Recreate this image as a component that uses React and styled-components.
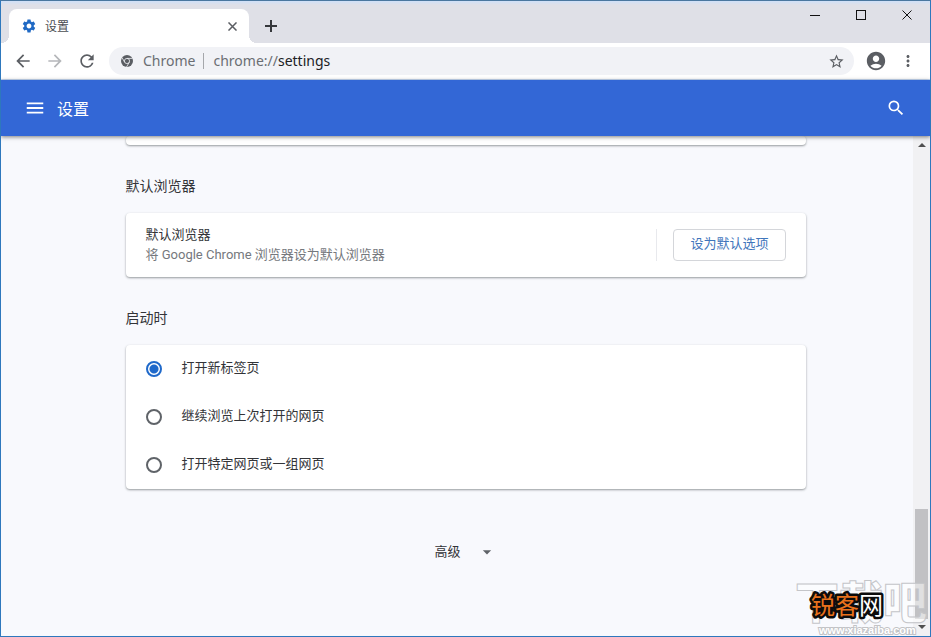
import React from 'react';
import styled, { createGlobalStyle } from 'styled-components';
import {
  MdAccountCircle,
  MdArrowBack,
  MdArrowDropDown,
  MdArrowForward,
  MdMenu,
  MdMoreVert,
  MdRefresh,
  MdSearch,
  MdSettings,
  MdStarBorder
} from 'react-icons/md';

const GlobalStyle = createGlobalStyle`
  * {
    box-sizing: border-box;
  }
  body {
    margin: 0;
    font-family: Roboto, "Noto Sans CJK SC", sans-serif;
    font-size: 13px;
    line-height: 20px;
    color: #333438;
  }
  button, input {
    font: inherit;
  }
`;

const Window = styled.div`
  position: relative;
  display: flex;
  flex-direction: column;
  height: 100vh;
  overflow: hidden;
  border: 1px solid #2e78bd;
  border-top-color: #4a779f;
  background: #f8f9fd;
`;

const TabStrip = styled.div`
  display: flex;
  flex: none;
  height: 42px;
  padding: 8px 0 0 8px;
  background: linear-gradient(#cfe0f8 0, #dfe0e7 4px);
`;

const Tab = styled.div`
  position: relative;
  display: flex;
  align-items: center;
  width: 240px;
  padding: 0 9px 0 12px;
  border-radius: 8px 8px 0 0;
  background: #fff;
  font-size: 12px;
  color: #4a4d51;

  &::before,
  &::after {
    content: '';
    position: absolute;
    bottom: 0;
    width: 8px;
    height: 8px;
  }
  &::before {
    right: 100%;
    background: radial-gradient(circle at 0 0, transparent 8px, #fff 8px);
  }
  &::after {
    left: 100%;
    background: radial-gradient(circle at 100% 0, transparent 8px, #fff 8px);
  }
`;

const TabTitle = styled.span`
  flex: 1;
  margin-left: 8px;
  padding-top: 2px;
`;

const IconButton = styled.button`
  display: flex;
  flex: none;
  align-items: center;
  justify-content: center;
  width: ${props => props.$size || 32}px;
  height: ${props => props.$size || 32}px;
  padding: 0;
  border: none;
  background: none;
  color: ${props => props.$color || '#5b5e63'};
`;

const NewTab = styled(IconButton)`
  margin: 1px 0 0 6px;
`;

const Caption = styled.div`
  display: flex;
  margin: -8px 0 0 auto;
`;

const CaptionButton = styled.button`
  display: flex;
  align-items: center;
  justify-content: center;
  width: 46px;
  height: 28px;
  padding: 0;
  border: none;
  background: none;
  color: #111;
`;

const Toolbar = styled.div`
  display: flex;
  flex: none;
  align-items: center;
  height: 37px;
  padding: 0 6px;
  border-bottom: 1px solid #c9dcf8;
  background: #fff;
`;

const Omnibox = styled.div`
  display: flex;
  flex: 1;
  align-items: center;
  height: 28px;
  margin: 0 6px;
  padding: 0 2px 0 11px;
  border-radius: 14px;
  background: #f1f2f6;
  font-family: "Noto Sans", sans-serif;
  font-size: 14px;
  color: #6b6e73;
`;

const SiteName = styled.span`
  margin-left: 9px;
  padding-right: 8px;
  border-right: 1px solid #a5a7ab;
  line-height: 16px;
`;

const Address = styled.a`
  flex: 1;
  margin-left: 9px;
  color: inherit;
  line-height: 16px;
  text-decoration: none;

  b {
    font-weight: 400;
    color: #202124;
  }
`;

const Header = styled.header`
  position: relative;
  z-index: 1;
  display: flex;
  flex: none;
  align-items: center;
  height: 56px;
  padding: 0 18px;
  background: #3367d6;
  box-shadow: 0 1px 4px rgba(0, 0, 0, 0.5);
  color: #fff;
`;

const PageTitle = styled.h1`
  flex: 1;
  margin: 0 0 0 6px;
  padding-top: 4px;
  font-size: 16px;
  font-weight: 400;
`;

const Body = styled.div`
  display: grid;
  flex: 1;
  grid-template-columns: 17px 1fr 17px;
  min-height: 0;
`;

const Main = styled.main`
  grid-column: 2;
  width: 100%;
  max-width: 680px;
  margin: 0 auto;
`;

const Card = styled.div`
  border-radius: 4px;
  background: #fff;
  box-shadow: 0 1px 2px rgba(60, 64, 67, 0.4), 0 1px 3px rgba(60, 64, 67, 0.15);
`;

const CardEnd = styled(Card)`
  height: 9px;
`;

const Heading = styled.h2`
  margin: 0;
  padding: 31px 0 17px;
  font-size: 14px;
  font-weight: 400;
  line-height: 20px;
`;

const BrowserRow = styled(Card)`
  display: flex;
  align-items: center;
  min-height: 64px;
  padding: 0 20px;
`;

const RowText = styled.div`
  flex: 1;
`;

const Secondary = styled.div`
  color: #75787d;
`;

const Action = styled.div`
  padding-left: 16px;
  border-left: 1px solid #e8e9ed;
`;

const OutlineButton = styled.button`
  display: block;
  height: 32px;
  padding: 0 16px 2px;
  border: 1px solid #d4d6da;
  border-radius: 4px;
  background: #fff;
  color: #3f75bb;
`;

const Option = styled.label`
  display: flex;
  align-items: center;
  height: 48px;
  padding: 0 20px;
`;

const OptionText = styled.span`
  padding-bottom: 2px;
`;

const Radio = styled.input`
  appearance: none;
  width: 16px;
  height: 16px;
  margin: 0 20px 0 0;
  border: 2px solid #5f6368;
  border-radius: 50%;

  &:checked {
    border-color: #1f69ca;
    background: radial-gradient(circle, #1f69ca 4px, transparent 5px);
  }
`;

const Advanced = styled.button`
  display: flex;
  align-items: center;
  gap: 16px;
  height: 32px;
  margin: 47px auto 0;
  padding: 0 8px;
  border: none;
  background: none;
  color: inherit;

  svg {
    color: #5f6368;
  }
`;

const ScrollTrack = styled.div`
  display: flex;
  grid-column: 3;
  flex-direction: column;
  align-items: center;
  justify-content: space-between;
  padding: 7px 0;
  background: #f1f1f3;
`;

const Arrow = styled.span`
  border: 4px solid transparent;
  border-top-width: 0;
  border-bottom: 4px solid #505050;
  transform: ${props => (props.$down ? 'rotate(180deg)' : 'none')};
`;

const Thumb = styled.div`
  width: 13px;
  height: 110px;
  margin: auto 0 6px;
  background: #c1c1c4;
`;

const Watermark = styled.div`
  position: absolute;
  z-index: 2;
  right: 0;
  bottom: 0;
  width: 136px;
  height: 60px;
  overflow: hidden;
  pointer-events: none;

  svg {
    display: block;
  }
`;

const startupOptions = ['打开新标签页', '继续浏览上次打开的网页', '打开特定网页或一组网页'];

const ChromeIcon = () => (
  <svg width="14" height="14" viewBox="0 0 14 14" aria-hidden="true">
    <circle cx="7" cy="7" r="6" fill="#5b5e63" />
    <circle cx="7" cy="7" r="2.6" fill="none" stroke="#f1f2f6" strokeWidth="0.8" />
    <path d="M7 4.4H12.6M4.7 8.3L2 3.6M9.3 8.3L6.5 13" stroke="#f1f2f6" strokeWidth="0.8" />
  </svg>
);

const CrossIcon = ({ size, width }) => (
  <svg width={size} height={size} viewBox="0 0 10 10" aria-hidden="true">
    <path d="M0.5 0.5L9.5 9.5M9.5 0.5L0.5 9.5" stroke="currentColor" strokeWidth={width} />
  </svg>
);

const SiteMark = () => (
  <Watermark>
    <svg width="136" height="60" viewBox="0 0 136 60">
      <g fontFamily="Noto Sans CJK SC, sans-serif" fontWeight="700">
        <text
          x="1"
          y="43"
          fontSize="44"
          fontWeight="900"
          fill="#fff"
          fillOpacity="0.5"
          stroke="#c4c5c9"
          strokeWidth="1"
        >
          下载吧
        </text>
        <text
          x="25"
          y="58"
          fontSize="11"
          fontFamily="Liberation Sans, sans-serif"
          fill="#fff"
          stroke="#c2c3c6"
          strokeWidth="2"
          paintOrder="stroke"
        >
          www.xiazaiba.com
        </text>
        <g fontSize="24" fontWeight="400" stroke="#0c0c0c" strokeWidth="5" strokeLinejoin="round" paintOrder="stroke">
          <text x="17" y="38" fill="#e8711c">锐客</text>
          <text x="65" y="38" fill="#fff">网</text>
        </g>
      </g>
    </svg>
  </Watermark>
);

class App extends React.Component {
  constructor(props) {
    super(props);
    this.state = { startup: 0 };
    this.selectStartup = this.selectStartup.bind(this);
  }
  selectStartup(e) {
    this.setState({ startup: Number(e.target.value) });
  }
  render() {
    return (
      <Window>
        <GlobalStyle />
        <TabStrip>
          <Tab>
            <MdSettings size={16} color="#1f69c4" />
            <TabTitle>设置</TabTitle>
            <IconButton $size={16} aria-label="关闭标签页"><CrossIcon size={9} width={1.7} /></IconButton>
          </Tab>
          <NewTab aria-label="新标签页" $color="#35373b">
            <svg width="12" height="12" viewBox="0 0 12 12">
              <path d="M6 0V12M0 6H12" stroke="currentColor" strokeWidth="2" />
            </svg>
          </NewTab>
          <Caption>
            <CaptionButton aria-label="最小化">
              <svg width="10" height="10"><path d="M0 5.5H10" stroke="currentColor" /></svg>
            </CaptionButton>
            <CaptionButton aria-label="最大化">
              <svg width="10" height="10"><rect x="0.5" y="0.5" width="9" height="9" fill="none" stroke="currentColor" /></svg>
            </CaptionButton>
            <CaptionButton aria-label="关闭"><CrossIcon size={10} width={1} /></CaptionButton>
          </Caption>
        </TabStrip>
        <Toolbar>
          <IconButton aria-label="后退"><MdArrowBack size={20} /></IconButton>
          <IconButton aria-label="前进" $color="#b5b7ba"><MdArrowForward size={20} /></IconButton>
          <IconButton aria-label="重新加载"><MdRefresh size={20} /></IconButton>
          <Omnibox>
            <ChromeIcon />
            <SiteName>Chrome</SiteName>
            <Address href="chrome://settings">chrome://<b>settings</b></Address>
            <IconButton aria-label="收藏"><MdStarBorder size={17} /></IconButton>
          </Omnibox>
          <IconButton aria-label="用户"><MdAccountCircle size={22} /></IconButton>
          <IconButton aria-label="菜单"><MdMoreVert size={18} /></IconButton>
        </Toolbar>
        <Header>
          <IconButton aria-label="主菜单" $color="#fff"><MdMenu size={22} /></IconButton>
          <PageTitle>设置</PageTitle>
          <IconButton aria-label="搜索" $color="#fff"><MdSearch size={20} /></IconButton>
        </Header>
        <Body>
          <Main>
            <CardEnd />
            <section>
              <Heading>默认浏览器</Heading>
              <BrowserRow>
                <RowText>
                  <div>默认浏览器</div>
                  <Secondary>将 Google Chrome 浏览器设为默认浏览器</Secondary>
                </RowText>
                <Action><OutlineButton>设为默认选项</OutlineButton></Action>
              </BrowserRow>
            </section>
            <section>
              <Heading>启动时</Heading>
              <Card>
                {startupOptions.map((label, i) => (
                  <Option key={label}>
                    <Radio
                      type="radio"
                      name="startup"
                      value={i}
                      checked={this.state.startup === i}
                      onChange={this.selectStartup}
                    />
                    <OptionText>{label}</OptionText>
                  </Option>
                ))}
              </Card>
            </section>
            <Advanced>
              高级
              <MdArrowDropDown size={20} />
            </Advanced>
          </Main>
          <ScrollTrack>
            <Arrow />
            <Thumb />
            <Arrow $down />
          </ScrollTrack>
        </Body>
        <SiteMark />
      </Window>
    );
  }
}

export default App;
